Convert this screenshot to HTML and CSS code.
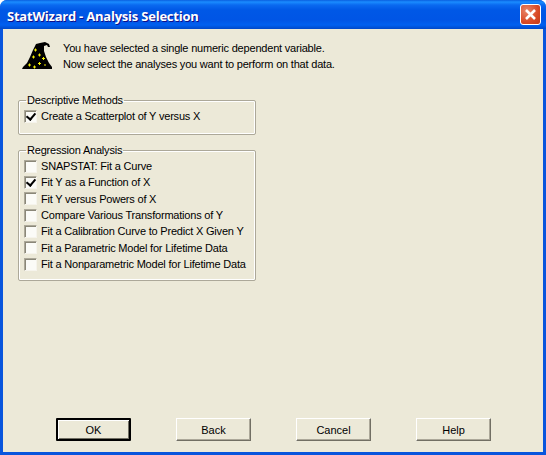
FILE: index.html
```html
<!DOCTYPE html>
<html lang="en">
  <head>
    <meta http-equiv="content-type" content="text/html; charset=UTF-8" />
    <title>StatWizard - Analysis Selection</title>
    <link rel="stylesheet" href="styles.css">
  </head>

  <body>
    <div class="window">
      <div class="titleBar">
        <span class="titleText">StatWizard - Analysis Selection</span>
        <div class="closeButton">
          <svg width="13" height="13" viewBox="0 0 13 13">
            <path d="M2 2 L11 11 M11 2 L2 11" stroke="#fff" stroke-width="2.6" />
          </svg>
        </div>
      </div>

      <div class="content">
        <div class="intro">
          <svg class="hat" width="32" height="30" viewBox="20 40 32 30">
            <path d="M21 68 L22 66 L26 62 L29 56 L32 49 L35 43 L39 42 L44 41 L48 43 L49 46 L47 46 L46 44 L43 45 L43 50 L45 56 L48 62 L51 66 L51 68 Z" fill="#000" />
            <path d="M33 49 h3 M34.500 47.500 v3 M37 54 h3 M38.500 52.500 v3 M31 56 h3 M32.500 54.500 v3 M41 57.500 h3 M42.500 56 v3 M37 62.500 h3 M38.500 61 v3 M27 64 h3 M28.500 62.500 v3 M43 64 h2 M32 66 h3 M33.500 64.500 v3" stroke="#f4f000" stroke-width="1" fill="none" />
          </svg>
          <div class="introText">
            <p>You have selected a single numeric dependent variable.</p>
            <p>Now select the analyses you want to perform on that data.</p>
          </div>
        </div>

        <fieldset class="group">
          <legend>Descriptive Methods</legend>
          <label class="option"><span class="box checked"></span>Create a Scatterplot of Y versus X</label>
        </fieldset>

        <fieldset class="group regression">
          <legend>Regression Analysis</legend>
          <label class="option"><span class="box"></span>SNAPSTAT: Fit a Curve</label>
          <label class="option"><span class="box checked"></span>Fit Y as a Function of X</label>
          <label class="option"><span class="box"></span>Fit Y versus Powers of X</label>
          <label class="option"><span class="box"></span>Compare Various Transformations of Y</label>
          <label class="option"><span class="box"></span>Fit a Calibration Curve to Predict X Given Y</label>
          <label class="option"><span class="box"></span>Fit a Parametric Model for Lifetime Data</label>
          <label class="option"><span class="box"></span>Fit a Nonparametric Model for Lifetime Data</label>
        </fieldset>

        <div class="buttons">
          <button class="btn default">OK</button>
          <button class="btn">Back</button>
          <button class="btn">Cancel</button>
          <button class="btn">Help</button>
        </div>
      </div>
    </div>
  </body>
</html>
```

FILE: styles.css
```css
html,
body {
  margin: 0;
  padding: 0;
  background-color: #fff;
}
.window {
  width: 546px;
  height: 455px;
  display: flex;
  flex-direction: column;
  overflow: hidden;
  border-radius: 7px 7px 0 0;
  background-color: #0855dd;
  font-family: "Liberation Sans", sans-serif;
  font-size: 11px;
  letter-spacing: -0.2px;
  color: #000;
}
.titleBar {
  height: 29px;
  flex: none;
  display: flex;
  align-items: center;
  justify-content: space-between;
  padding: 2px 5px 0 7px;
  box-sizing: border-box;
  background: linear-gradient(
    to bottom,
    #0a5fe0 0,
    #1a8cff 2px,
    #0a6af0 5px,
    #0058e6 10px,
    #0055e5 20px,
    #0060f0 25px,
    #0048c8 29px
  );
}
.titleText {
  color: #fff;
  font-family: "Open Sans", sans-serif;
  font-size: 13px;
  font-weight: bold;
  letter-spacing: -0.22px;
  text-shadow: 1px 1px 0 #0f1089;
}
.closeButton {
  width: 21px;
  height: 21px;
  margin-top: -2px;
  box-sizing: border-box;
  display: flex;
  align-items: center;
  justify-content: center;
  border: 1px solid #fff;
  border-radius: 3px;
  background: radial-gradient(circle at 30% 30%, #e8866a, #d94a26 60%, #c23a18);
}
.content {
  flex: 1;
  margin: 0 3px 3px 3px;
  padding: 12px 15px 0 15px;
  display: flex;
  flex-direction: column;
  background-color: #ece9d8;
}
.intro {
  display: flex;
  gap: 10px;
  height: 53px;
  flex: none;
  padding-left: 3px;
  box-sizing: border-box;
  align-items: flex-start;
}
.hat {
  flex: none;
}
.introText {
  margin-top: -1px;
}
.introText p {
  margin: 0;
  line-height: 16px;
}
.group {
  width: 238px;
  height: 41px;
  flex: none;
  box-sizing: border-box;
  margin: 0;
  padding: 1px 0 0 5px;
  border: 1px solid #aca899;
  box-shadow: inset 0 0 0 1px #fff;
  border-radius: 2px;
}
.regression {
  height: 137px;
  margin-top: 9px;
}
.group legend {
  margin-left: 2px;
  padding: 0 1px;
  line-height: 13px;
  height: 13px;
}
.option {
  display: flex;
  align-items: center;
  height: 16.33px;
  white-space: nowrap;
}
.box {
  position: relative;
  flex: none;
  width: 13px;
  height: 13px;
  margin-right: 4px;
  box-sizing: border-box;
  border: 1px solid;
  border-color: #aca899 #f6f4ec #f6f4ec #aca899;
  box-shadow: inset 1px 1px 0 #8a8778;
  background-color: #fbfbf7;
}
.checked::after {
  content: "";
  position: absolute;
  left: 3px;
  top: 0;
  width: 4px;
  height: 7px;
  border: solid #000;
  border-width: 0 2px 2px 0;
  transform: rotate(40deg);
}
.buttons {
  margin-top: auto;
  margin-bottom: 11px;
  padding-left: 38px;
  display: flex;
  gap: 45px;
}
.btn {
  width: 75px;
  height: 23px;
  padding: 0;
  box-sizing: border-box;
  font-family: "Liberation Sans", sans-serif;
  font-size: 11px;
  color: #000;
  background-color: #ece9d8;
  border: 1px solid;
  border-color: #fff #716f64 #716f64 #fff;
  box-shadow: inset -1px -1px 0 #aca899;
}
.default {
  border: 2px solid #000;
  border-radius: 1px;
  box-shadow: inset 1px 1px 0 #fff, inset -1px -1px 0 #716f64;
}
```
